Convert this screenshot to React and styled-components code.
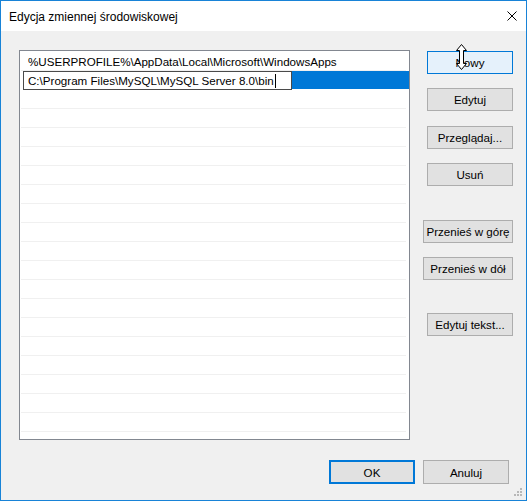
import React from "react";
import styled, { createGlobalStyle } from "styled-components";

const GlobalStyle = createGlobalStyle`
  html, body {
    margin: 0;
    padding: 0;
    background: #ffffff;
  }
  body {
    font-family: "Liberation Sans", Arial, sans-serif;
    font-size: 11.6px;
    color: #000000;
  }
`;

const paths = [
  "%USERPROFILE%\\AppData\\Local\\Microsoft\\WindowsApps",
];
const editing = "C:\\Program Files\\MySQL\\MySQL Server 8.0\\bin";
const EMPTY_ROWS = 18;

function App() {
  return (
    <>
      <GlobalStyle />
      <Window>
        <TitleBar>
          <Title>Edycja zmiennej środowiskowej</Title>
          <svg width="10" height="10" viewBox="0 0 10 10">
            <path d="M0.5 0.5 L9.5 9.5 M9.5 0.5 L0.5 9.5" stroke="#000" strokeWidth="1" />
          </svg>
        </TitleBar>
        <Body>
          <Content>
            <ListBox>
              {paths.map((p) => (
                <Row key={p}>{p}</Row>
              ))}
              <SelectedRow>
                <EditBox>
                  {editing}
                  <Caret />
                </EditBox>
                <Highlight />
              </SelectedRow>
              {Array.from({ length: EMPTY_ROWS }).map((_, i) => (
                <Row key={i} />
              ))}
            </ListBox>
            <Side>
              <Button $top={1} $hover>
                Nowy
              </Button>
              <Button $top={14}>Edytuj</Button>
              <Button $top={15}>Przeglądaj...</Button>
              <Button $top={14}>Usuń</Button>
              <Button $top={34} $width={90}>
                Przenieś w górę
              </Button>
              <Button $top={14} $width={90}>
                Przenieś w dół
              </Button>
              <Button $top={33}>Edytuj tekst...</Button>
            </Side>
          </Content>
          <Footer>
            <Button $default $height={24}>
              OK
            </Button>
            <Button $height={24}>Anuluj</Button>
          </Footer>
        </Body>
        <Cursor width="11" height="26" viewBox="0 0 11 26">
          <path
            d="M5.5 0.5 L10.5 6.5 L7.5 6.5 L7.5 19.5 L10.5 19.5 L5.5 25.5 L0.5 19.5 L3.5 19.5 L3.5 6.5 L0.5 6.5 Z"
            fill="#fff"
            stroke="#000"
            strokeWidth="1"
          />
        </Cursor>
        <Grip width="9" height="9" viewBox="0 0 9 9">
          <rect x="6" y="0" width="2" height="2" fill="#b8b8b8" />
          <rect x="3" y="3" width="2" height="2" fill="#b8b8b8" />
          <rect x="6" y="3" width="2" height="2" fill="#b8b8b8" />
          <rect x="0" y="6" width="2" height="2" fill="#b8b8b8" />
          <rect x="3" y="6" width="2" height="2" fill="#b8b8b8" />
          <rect x="6" y="6" width="2" height="2" fill="#b8b8b8" />
        </Grip>
      </Window>
    </>
  );
}

const Window = styled.div`
  position: relative;
  width: 527px;
  height: 501px;
  box-sizing: border-box;
  border: 1px solid #1883d7;
  background: #f0f0f0;
  display: flex;
  flex-direction: column;
  overflow: hidden;
`;

const TitleBar = styled.div`
  height: 30px;
  background: #ffffff;
  display: flex;
  align-items: center;
  justify-content: space-between;
  padding: 0 9px 0 8px;
`;

const Title = styled.span`
  font-size: 12px;
  line-height: 1;
  margin-top: 1px;
`;

const Body = styled.div`
  padding: 19px 13px 0 18px;
  display: flex;
  flex-direction: column;
`;

const Content = styled.div`
  display: flex;
  height: 390px;
`;

const ListBox = styled.div`
  width: 391px;
  height: 390px;
  box-sizing: border-box;
  border: 1px solid #828790;
  background: #ffffff;
  padding-top: 1px;
  overflow: hidden;
`;

const Row = styled.div`
  height: 18px;
  margin: 0 3px 0 1px;
  border-bottom: 1px solid #f0f0f0;
  padding-left: 7px;
  line-height: 19px;
  white-space: nowrap;
`;

const SelectedRow = styled.div`
  display: flex;
  height: 19px;
  padding-left: 3px;
`;

const EditBox = styled.div`
  width: 269px;
  height: 19px;
  box-sizing: border-box;
  border: 1px solid #4a4a4a;
  background: #ffffff;
  padding-left: 4px;
  line-height: 17px;
  white-space: nowrap;
  display: flex;
  align-items: center;
`;

const Caret = styled.span`
  display: inline-block;
  width: 1px;
  height: 14px;
  background: #000;
  margin-left: 1px;
`;

const Highlight = styled.div`
  flex: 1;
  height: 18px;
  background: #0078d7;
`;

const Side = styled.div`
  flex: 1;
  display: flex;
  flex-direction: column;
  align-items: flex-end;
`;

const Button = styled.div`
  width: ${(p) => p.$width || 86}px;
  height: ${(p) => p.$height || 23}px;
  margin-top: ${(p) => p.$top || 0}px;
  box-sizing: border-box;
  border: ${(p) => (p.$default ? "2px solid #0078d7" : p.$hover ? "1px solid #0078d7" : "1px solid #adadad")};
  background: ${(p) => (p.$hover ? "#e5f1fb" : "#e1e1e1")};
  display: flex;
  align-items: center;
  justify-content: center;
  white-space: nowrap;
`;

const Footer = styled.div`
  display: flex;
  justify-content: flex-end;
  gap: 8px;
  margin-top: 20px;
  padding-right: 4px;
`;

const Cursor = styled.svg`
  position: absolute;
  left: 455px;
  top: 43px;
`;

const Grip = styled.svg`
  position: absolute;
  right: 3px;
  bottom: 3px;
`;

export default App;
